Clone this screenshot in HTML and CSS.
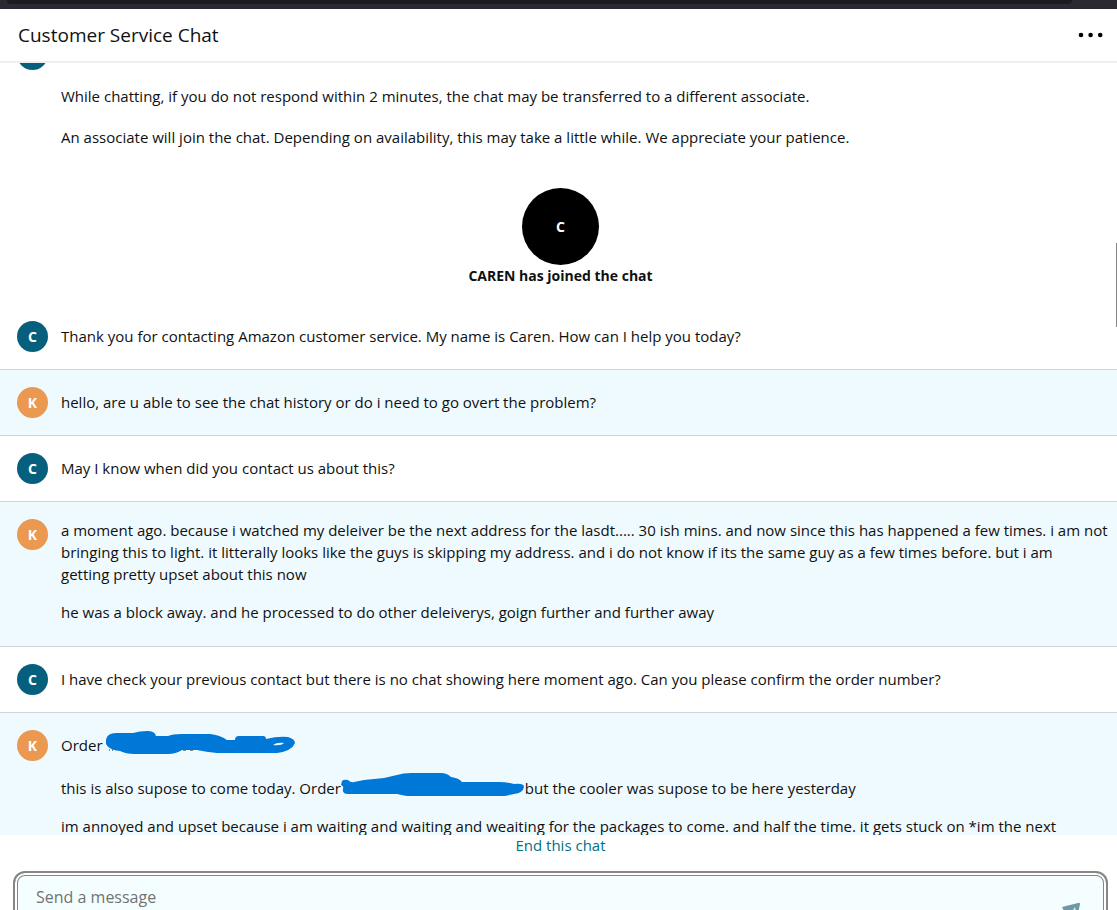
FILE: index.html
```html
<!DOCTYPE html>
<html lang="en">
<head>
<meta charset="utf-8">
<title>Customer Service Chat</title>
<link rel="stylesheet" href="styles.css">
</head>
<body>
<div class="app">
  <div class="window-edge"><div class="window-tab"></div></div>
  <header class="header">
    <h1 class="title">Customer Service Chat</h1>
    <button class="menu" type="button" aria-label="More options">
      <svg width="26" height="6" viewBox="0 0 26 6"><circle cx="3" cy="3" r="2.3"/><circle cx="12.6" cy="3" r="2.3"/><circle cx="22.2" cy="3" r="2.3"/></svg>
    </button>
  </header>
  <main class="log">
    <article class="message intro">
      <span class="avatar agent"></span>
      <div class="text">
        <p>While chatting, if you do not respond within 2 minutes, the chat may be transferred to a different associate.</p>
        <p>An associate will join the chat. Depending on availability, this may take a little while. We appreciate your patience.</p>
      </div>
    </article>
    <section class="joined">
      <span class="joined-avatar">C</span>
      <strong>CAREN has joined the chat</strong>
    </section>
    <article class="message">
      <span class="avatar agent">C</span>
      <div class="text"><p>Thank you for contacting Amazon customer service. My name is Caren. How can I help you today?</p></div>
    </article>
    <article class="message own">
      <span class="avatar customer">K</span>
      <div class="text"><p>hello, are u able to see the chat history or do i need to go overt the problem?</p></div>
    </article>
    <article class="message">
      <span class="avatar agent">C</span>
      <div class="text"><p>May I know when did you contact us about this?</p></div>
    </article>
    <article class="message own">
      <span class="avatar customer">K</span>
      <div class="text long">
        <p>a moment ago. because i watched my deleiver be the next address for the lasdt..... 30 ish mins. and now since this has happened a few times. i am not<br>bringing this to light. it litterally looks like the guys is skipping my address. and i do not know if its the same guy as a few times before. but i am<br>getting pretty upset about this now</p>
        <p>he was a block away. and he processed to do other deleiverys, goign further and further away</p>
      </div>
    </article>
    <article class="message">
      <span class="avatar agent">C</span>
      <div class="text"><p>I have check your previous contact but there is no chat showing here moment ago. Can you please confirm the order number?</p></div>
    </article>
    <article class="message own">
      <span class="avatar customer">K</span>
      <div class="text">
        <p class="order">Order <svg class="scribble" width="190" height="22" viewBox="0 0 190 22"><path class="trace" d="M3 16h1M6 16h1M77 16h3M84 16h3"/><path d="M0 6Q1-1 10-1H27Q34-3 41-3Q49-3 50 2H62Q66 0 76 0H104Q114 1 121 6H129Q129 2 133 2H157Q160 2 160 5Q172 2 182 3Q189 5 189 9Q186 17 171 19H111Q100 18 91 16H76Q70 20 62 20H28Q20 20 14 17Q3 16 0 10Z"/><path class="gap" d="M167 11Q171 8 178 9Q175 12 167 11Z"/></svg></p>
        <p>this is also supose to come today. Order<svg class="scribble" width="184" height="22" viewBox="0 0 184 22"><path d="M1 4Q3 2 7 3Q10 6 13 5L23 3L43 1L56-2Q62-4 70-4H100Q106-4 110 0Q118 1 121 5H158Q166 5 173 7Q183 6 183 10Q182 16 173 17L164 19H66Q60 18 56 17H7Q1 17 2 12Q3 9 0 8Z"/></svg>but the cooler was supose to be here yesterday</p>
        <p>im annoyed and upset because i am waiting and waiting and weaiting for the packages to come. and half the time. it gets stuck on *im the next</p>
      </div>
    </article>
    <div class="scrollbar"></div>
  </main>
  <footer class="footer">
    <a class="end" href="#">End this chat</a>
    <form class="composer">
      <input class="field" type="text" placeholder="Send a message" aria-label="Send a message">
      <button class="send" type="button" aria-label="Send">
        <svg width="22" height="22" viewBox="0 0 22 22"><path class="plane" d="M1 5L17 1Q19 0 19 2L15 21L10 13L3 9Z"/><path class="fold" d="M10 11L14 5L15 9L12 14Z"/></svg>
      </button>
    </form>
  </footer>
</div>
</body>
</html>
```
FILE: styles.css
```css
* { box-sizing: border-box; }
body {
  margin: 0;
  overflow: hidden;
  background: #fff;
  color: #0f1111;
  font: 15px/22px "Open Sans", sans-serif;
}
.app { display: flex; flex-direction: column; height: 100vh; overflow: hidden; }
.window-edge { flex: none; height: 9px; padding: 0 45px 0 7px; background: #2b2a33; }
.window-tab { height: 4px; background: #1c1b22; border-radius: 0 0 4px 4px; }
.header {
  display: flex;
  flex: none;
  align-items: center;
  justify-content: space-between;
  height: 54px;
  padding: 0 13px 0 18px;
  border-bottom: 2px solid #eeefef;
}
.title { margin: 0; font-size: 19px; line-height: 26px; font-weight: 400; }
.menu { display: flex; padding: 0; border: 0; background: none; }
.log { position: relative; flex: 1; min-height: 0; overflow: hidden; }
.message {
  display: flex;
  align-items: flex-start;
  gap: 13px;
  padding: 17px 4px 17px 17px;
  border-bottom: 1px solid #cdd5d6;
}
.own { background: #effaff; }
.avatar {
  display: flex;
  flex: none;
  align-items: center;
  justify-content: center;
  width: 31px;
  height: 31px;
  border-radius: 50%;
  color: #fff;
  font-size: 14px;
  font-weight: 700;
}
.agent { background: #065f7c; }
.customer { background: #eb9850; }
.text { flex: 1; min-width: 0; padding: 4px 0 5px; }
.long { padding: 0 0 6px; }
.text p { margin: 0; }
.text p + p { margin-top: 16px; }
.text .order + p { margin-top: 21px; }
.intro { margin-top: -41px; padding-bottom: 0; border: 0; }
.intro .text { padding-top: 46px; }
.intro .text p + p { margin-top: 19px; }
.scribble { overflow: visible; vertical-align: top; fill: #0078d7; }
.gap { fill: #effaff; }
.trace { stroke: #0f1111; stroke-width: 1; }
.joined {
  display: flex;
  flex-direction: column;
  align-items: center;
  padding: 35px 0 17px 4px;
  font-size: 14px;
}
.joined-avatar {
  display: flex;
  align-items: center;
  justify-content: center;
  width: 77px;
  height: 77px;
  border-radius: 50%;
  background: #000;
  color: #fff;
  font-weight: 700;
}
.scrollbar { position: absolute; top: 180px; right: 0; width: 1px; height: 84px; background: #858585; }
.footer { display: flex; flex: none; flex-direction: column; align-items: center; height: 75px; padding: 0 9px 0 13px; overflow: hidden; }
.end { margin-bottom: 16px; color: #007185; line-height: 20px; text-decoration: none; }
.composer {
  display: flex;
  flex: none;
  align-items: flex-start;
  width: 100%;
  height: 80px;
  padding: 3px;
  border: 2px solid #838787;
  border-radius: 12px;
  background: #f5feff;
  box-shadow: inset 0 0 0 2px #fff, inset 0 0 0 3px #838787;
}
.field { flex: 1; min-width: 0; height: 42px; padding: 0 18px; border: 0; outline: 0; background: none; font: 16px/22px "Open Sans", sans-serif; }
.field::placeholder { color: #6f7373; opacity: 1; }
.send { display: flex; padding: 26px 20px 0 0; border: 0; background: none; }
.plane { fill: #6f9aa5; }
.fold { fill: #dcecef; }
```
